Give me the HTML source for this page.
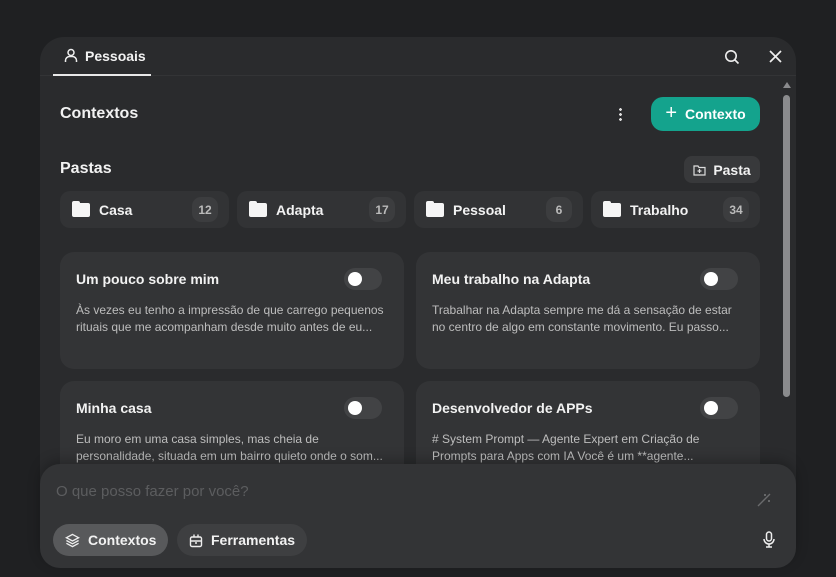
<!DOCTYPE html>
<html><head><meta charset="utf-8"><style>
*{box-sizing:border-box;margin:0;padding:0}
body{width:836px;height:577px;background:#1f2022;font-family:"Liberation Sans",sans-serif;color:#f2f2f2;position:relative;overflow:hidden}
.panel{position:absolute;left:40px;top:37px;width:756px;height:531px;background:#2a2b2d;border-radius:24px}
.hdr{position:absolute;left:0;top:0;width:756px;height:39px;border-bottom:1px solid #333436}
.tab{position:absolute;left:13px;top:0;width:98px;height:39px;border-bottom:2px solid #e8e8e8;font-size:14px;font-weight:bold;display:flex;align-items:center;gap:7px;padding-left:11px}
.abs{position:absolute}
h2{position:absolute;font-size:16px;font-weight:bold}
.btn{position:absolute;left:611px;top:60px;width:109px;height:34px;border-radius:12px;background:#14a38d;color:#fff;font-size:14px;font-weight:bold;display:flex;align-items:center;justify-content:center;gap:8px}
.pasta{position:absolute;left:644px;top:119px;width:76px;height:27px;border-radius:8px;background:#38393b;font-size:14px;font-weight:bold;display:flex;align-items:center;justify-content:center;gap:7px}
.chip{position:absolute;top:154px;width:169px;height:37px;border-radius:10px;background:#323335;display:flex;align-items:center;padding-left:12px;font-size:14px;font-weight:bold;gap:9px}
.chip .n{position:absolute;right:11px;top:6px;width:26px;height:25px;border-radius:9px;background:#3c3d3f;font-size:12px;color:#bbb;display:flex;align-items:center;justify-content:center}
.fold{width:18px;height:14px;background:#f5f5f5;border-radius:2px;position:relative}
.fold:before{content:"";position:absolute;left:0;top:-2px;width:8px;height:4px;background:#f5f5f5;border-radius:2px 2px 0 0}
.card{position:absolute;width:344px;height:117px;border-radius:14px;background:#333436}
.card .t{position:absolute;left:16px;top:19px;font-size:14px;font-weight:bold}
.card .d{position:absolute;left:16px;top:50px;width:312px;font-size:12px;line-height:17px;color:#bdbdbd}
.tg{position:absolute;right:22px;top:16px;width:38px;height:22px;border-radius:11px;background:#424345}
.tg:after{content:"";position:absolute;left:4px;top:4px;width:14px;height:14px;border-radius:50%;background:#fff}
.sb{position:absolute;left:743px;top:58px;width:7px;height:302px;border-radius:4px;background:#8a8b8d}
.input{position:absolute;left:40px;top:464px;width:756px;height:104px;background:#333436;border-radius:20px;box-shadow:0 -4px 12px rgba(0,0,0,.25)}
.ph{position:absolute;left:16px;top:19px;font-size:15px;color:#5c5d5f}
.pill{position:absolute;top:60px;height:32px;border-radius:16px;display:flex;align-items:center;gap:8px;font-size:14px;font-weight:bold;padding:0 12px}
</style></head><body>
<div class="panel">
 <div class="hdr">
  <div class="tab"><svg width="14" height="15" viewBox="0 0 14 15" fill="none" stroke="#eee" stroke-width="1.5"><circle cx="7" cy="4.5" r="3"/><path d="M1.5 14v-1.5a4 4 0 0 1 4-4h3a4 4 0 0 1 4 4V14"/></svg>Pessoais</div>
  <svg class="abs" style="left:684px;top:12px" width="16" height="16" viewBox="0 0 16 16" fill="none" stroke="#eee" stroke-width="1.6"><circle cx="7" cy="7" r="5.2"/><path d="M11 11l3.5 3.5"/></svg>
  <svg class="abs" style="left:729px;top:13px" width="13" height="13" viewBox="0 0 13 13" stroke="#eee" stroke-width="1.7"><path d="M1 1l11 11M12 1L1 12"/></svg>
 </div>
 <h2 style="left:20px;top:68px">Contextos</h2>
 <div class="abs" style="left:579px;top:70px;width:3px;height:14px;background:radial-gradient(circle,#ddd 1.3px,transparent 1.5px) 0 0/3px 5px"></div>
 <div class="btn"><span style="font-size:20px;font-weight:normal;margin-top:-2px">+</span>Contexto</div>
 <h2 style="left:20px;top:123px">Pastas</h2>
 <div class="pasta"><svg width="13" height="12" viewBox="0 0 13 12" fill="none" stroke="#ddd" stroke-width="1.2"><path d="M1 2h4l1 1.5h6v7.5H1z"/><path d="M6.5 5v4M4.5 7h4"/></svg>Pasta</div>
 <div class="chip" style="left:20px"><div class="fold"></div>Casa<span class="n">12</span></div>
 <div class="chip" style="left:197px"><div class="fold"></div>Adapta<span class="n">17</span></div>
 <div class="chip" style="left:374px"><div class="fold"></div>Pessoal<span class="n">6</span></div>
 <div class="chip" style="left:551px"><div class="fold"></div>Trabalho<span class="n">34</span></div>
 <div class="card" style="left:20px;top:215px"><div class="t">Um pouco sobre mim</div><div class="tg"></div><div class="d">Às vezes eu tenho a impressão de que carrego pequenos rituais que me acompanham desde muito antes de eu...</div></div>
 <div class="card" style="left:376px;top:215px"><div class="t">Meu trabalho na Adapta</div><div class="tg"></div><div class="d">Trabalhar na Adapta sempre me dá a sensação de estar no centro de algo em constante movimento. Eu passo...</div></div>
 <div class="card" style="left:20px;top:344px"><div class="t">Minha casa</div><div class="tg"></div><div class="d">Eu moro em uma casa simples, mas cheia de personalidade, situada em um bairro quieto onde o som...</div></div>
 <div class="card" style="left:376px;top:344px"><div class="t">Desenvolvedor de APPs</div><div class="tg"></div><div class="d"># System Prompt — Agente Expert em Criação de Prompts para Apps com IA Você é um **agente...</div></div>
 <div class="abs" style="left:743px;top:45px;width:0;height:0;border-left:4px solid transparent;border-right:4px solid transparent;border-bottom:6px solid #8a8b8d"></div>
 <div class="sb"></div>
</div>
<div class="input">
 <div class="ph">O que posso fazer por você?</div>
 <svg class="abs" style="left:716px;top:28px" width="16" height="16" viewBox="0 0 16 16" fill="none" stroke="#6a6b6d" stroke-width="1.4"><path d="M2 14L14 2M9 2v2M8 3h2M13 8v2M12 9h2"/></svg>
 <div class="pill" style="left:13px;background:#58595b"><svg width="15" height="15" viewBox="0 0 16 16" fill="none" stroke="#eee" stroke-width="1.4"><path d="M8 1.5L14.5 5 8 8.5 1.5 5z"/><path d="M1.5 8L8 11.5 14.5 8M1.5 11L8 14.5 14.5 11"/></svg>Contextos</div>
 <div class="pill" style="left:137px;background:#3e3f41"><svg width="14" height="15" viewBox="0 0 14 15" fill="none" stroke="#eee" stroke-width="1.4"><rect x="1.5" y="4" width="11" height="9.5" rx="1.5"/><path d="M1.5 8h11M5 1.5v3M9 1.5v3M6 10h2"/></svg>Ferramentas</div>
 <svg class="abs" style="left:723px;top:67px" width="12" height="17" viewBox="0 0 12 17" fill="none" stroke="#eee" stroke-width="1.5"><rect x="3.5" y="1" width="5" height="9" rx="2.5"/><path d="M1 8a5 5 0 0 0 10 0M6 13v3M3 16h6"/></svg>
</div>
</body></html>
